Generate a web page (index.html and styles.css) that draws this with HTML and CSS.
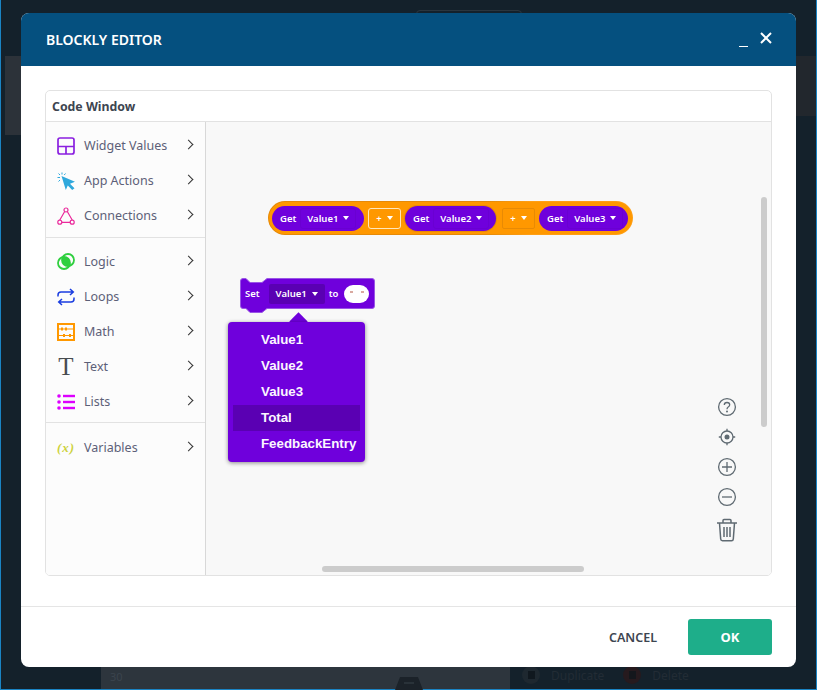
FILE: index.html
```html
<!DOCTYPE html>
<html lang="en">
<head>
    <meta charset="UTF-8">
    <meta name="viewport" content="width=device-width, initial-scale=1.0">
    <title>Blockly Editor</title>
    <link rel="stylesheet" href="styles.css">
</head>
<body>

<!-- dimmed page behind the dialog -->
<div class="page">
    <div class="topbar"><span class="top-btn"></span></div>
    <div class="bands">
        <div class="band-left"></div>
        <div class="band-right"></div>
    </div>
    <div class="bottom">
        <div class="bottom-left"></div>
        <div class="bottom-mid">
            <span class="dim-num">30</span>
            <svg class="dim-handle" width="28" height="13" viewBox="0 0 28 13"><path d="M5 0H23L28 13H0Z" fill="#1b2229"/><path d="M9 6H19" stroke="#39424b" stroke-width="1"/></svg>
        </div>
        <div class="bottom-right">
            <span class="dim-circle"><i></i></span><span class="dim-text">Duplicate</span>
            <span class="dim-circle dim-red"><i></i></span><span class="dim-text">Delete</span>
        </div>
    </div>
</div>

<div class="modal">
    <div class="modal-head">
        <span class="modal-title">BLOCKLY EDITOR</span>
        <span class="modal-min"></span>
        <svg class="modal-close" width="12" height="12" viewBox="0 0 12 12"><path d="M1 1L11 11M11 1L1 11" stroke="#fff" stroke-width="2"/></svg>
    </div>

    <div class="modal-body">
        <div class="card">
            <div class="card-head">Code Window</div>
            <div class="card-main">
                <div class="sidebar">
                    <div class="side-group side-first">
                        <div class="side-item">
                            <svg class="side-icon" viewBox="0 0 18 18"><rect x="1" y="1" width="16" height="16" rx="2" fill="none" stroke="#8a1fe0" stroke-width="1.7"/><path d="M1 9.500H17M9 9.500V17" stroke="#8a1fe0" stroke-width="1.7"/></svg>
                            <span class="side-label">Widget Values</span><span class="chev"></span>
                        </div>
                        <div class="side-item">
                            <svg class="side-icon" viewBox="0 0 18 18"><path d="M4.500 4L18 9.800L13 11.800L17.500 16.200L15.200 18L10.800 13.400L8.800 18Z" fill="#2fa8dc"/><path d="M.5 5.500H3M5 .5V2.500M1.500 1.500L3 3M8.500 1.500L7.200 3M1.500 9.500L3 8" stroke="#2fa8dc" stroke-width="1"/></svg>
                            <span class="side-label">App Actions</span><span class="chev"></span>
                        </div>
                        <div class="side-item">
                            <svg class="side-icon" viewBox="0 0 18 18"><path d="M7.700 4.500L2.800 13M4.800 15.300H13.200M10.300 4.500L15.200 13" fill="none" stroke="#ea2a9b" stroke-width="1.200"/><circle cx="9" cy="3" r="2" fill="none" stroke="#ea2a9b" stroke-width="1.200"/><circle cx="2.800" cy="15.200" r="2" fill="none" stroke="#ea2a9b" stroke-width="1.200"/><circle cx="15.200" cy="15.200" r="2" fill="none" stroke="#ea2a9b" stroke-width="1.200"/></svg>
                            <span class="side-label">Connections</span><span class="chev"></span>
                        </div>
                    </div>
                    <div class="side-group">
                        <div class="side-item">
                            <svg class="side-icon" viewBox="0 0 18 18"><circle cx="7" cy="10" r="6" fill="none" stroke="#2fcf3f" stroke-width="1.800"/><circle cx="11" cy="7" r="6" fill="none" stroke="#2fcf3f" stroke-width="1.800"/><path d="M5.600 4.500A6 6 0 0 1 12.500 12.500A6 6 0 0 1 5.600 4.500Z" fill="#2fcf3f"/></svg>
                            <span class="side-label">Logic</span><span class="chev"></span>
                        </div>
                        <div class="side-item">
                            <svg class="side-icon" viewBox="0 0 18 18"><path d="M1 8.500V7Q1 4 4 4H16M13 1L16.300 4L13 7M17 9.500V11Q17 14 14 14H2M5 11L1.700 14L5 17" fill="none" stroke="#1a3de0" stroke-width="1.500"/></svg>
                            <span class="side-label">Loops</span><span class="chev"></span>
                        </div>
                        <div class="side-item">
                            <svg class="side-icon" viewBox="0 0 18 18"><rect x="1" y="1" width="16" height="16" fill="none" stroke="#ff9800" stroke-width="2"/><path d="M1 6H17M1 12.500H17" stroke="#ff9800" stroke-width="1.200"/><path d="M5 4.500V7.500M9 4.500V7.500M13 11V14M7 11V14" stroke="#ff9800" stroke-width="2"/></svg>
                            <span class="side-label">Math</span><span class="chev"></span>
                        </div>
                        <div class="side-item">
                            <span class="side-icon icon-t">T</span>
                            <span class="side-label">Text</span><span class="chev"></span>
                        </div>
                        <div class="side-item">
                            <svg class="side-icon" viewBox="0 0 18 18"><g fill="#dd00ff"><circle cx="2" cy="3" r="1.800"/><circle cx="2" cy="9" r="1.800"/><circle cx="2" cy="15" r="1.800"/><rect x="6" y="1.800" width="12" height="2.400"/><rect x="6" y="7.800" width="12" height="2.400"/><rect x="6" y="13.800" width="12" height="2.400"/></g></svg>
                            <span class="side-label">Lists</span><span class="chev"></span>
                        </div>
                    </div>
                    <div class="side-group side-last">
                        <div class="side-item">
                            <span class="side-icon icon-x">(x)</span>
                            <span class="side-label">Variables</span><span class="chev"></span>
                        </div>
                    </div>
                </div>

                <div class="workspace">
                    <div class="expr">
                        <div class="pill pill-a"><span class="blk-text">Get</span><span class="blk-field">Value1<i class="caret"></i></span></div>
                        <div class="op op-selected">+<i class="caret"></i></div>
                        <div class="pill pill-b"><span class="blk-text">Get</span><span class="blk-field">Value2<i class="caret"></i></span></div>
                        <div class="op op-second">+<i class="caret"></i></div>
                        <div class="pill pill-c"><span class="blk-text">Get</span><span class="blk-field">Value3<i class="caret"></i></span></div>
                    </div>

                    <div class="set-block">
                        <svg class="set-shape" width="135" height="36" viewBox="0 0 135 36"><path d="M3 .5H6L10 4.500H22L27 .5H132Q134.500 .5 134.500 3V28Q134.500 30.500 132 30.500H27L22 34.500H10L6 30.500H3Q.5 30.500 .5 28V3Q.5 .5 3 .5Z" fill="#6f00dc" stroke="#9a55e6"/></svg>
                        <div class="set-row">
                            <span class="blk-text">Set</span>
                            <span class="set-field">Value1<i class="caret"></i></span>
                            <span class="blk-text">to</span>
                            <span class="set-input"><i></i><i></i></span>
                        </div>
                    </div>

                    <div class="menu-arrow"></div>
                    <div class="menu">
                        <div class="menu-item">Value1</div>
                        <div class="menu-item">Value2</div>
                        <div class="menu-item">Value3</div>
                        <div class="menu-item menu-active">Total</div>
                        <div class="menu-item">FeedbackEntry</div>
                    </div>

                    <div class="tools">
                        <svg width="20" height="20" viewBox="0 0 20 20"><circle cx="10" cy="10" r="8.400" fill="none" stroke="#5f6a72" stroke-width="1.300"/><path d="M7.300 8Q7.300 5.500 10 5.500Q12.700 5.500 12.700 7.800Q12.700 9.200 11.200 10Q10 10.700 10 12.300" fill="none" stroke="#5f6a72" stroke-width="1.300"/><circle cx="10" cy="14.500" r="1" fill="#5f6a72"/></svg>
                        <svg width="20" height="20" viewBox="0 0 20 20"><circle cx="10" cy="10" r="6" fill="none" stroke="#5f6a72" stroke-width="1.300"/><circle cx="10" cy="10" r="2.500" fill="#5f6a72"/><path d="M10 1.800V4M10 16V18.200M1.800 10H4M16 10H18.200" stroke="#5f6a72" stroke-width="1.300"/></svg>
                        <svg width="20" height="20" viewBox="0 0 20 20"><circle cx="10" cy="10" r="8.400" fill="none" stroke="#5f6a72" stroke-width="1.300"/><path d="M10 5V15M5 10H15" stroke="#5f6a72" stroke-width="1.300"/></svg>
                        <svg width="20" height="20" viewBox="0 0 20 20"><circle cx="10" cy="10" r="8.400" fill="none" stroke="#5f6a72" stroke-width="1.300"/><path d="M5 10H15" stroke="#5f6a72" stroke-width="1.300"/></svg>
                        <svg class="trash" width="22" height="24" viewBox="0 0 22 24"><path d="M1 5H21M7 4.500V2.500Q7 1.500 8 1.500H14Q15 1.500 15 2.500V4.500" fill="none" stroke="#5f6a72" stroke-width="1.500"/><path d="M3.500 5L4.700 21Q4.800 22.800 6.500 22.800H15.500Q17.200 22.800 17.300 21L18.500 5" fill="none" stroke="#5f6a72" stroke-width="1.500"/><path d="M8 9V19M11 9V19M14 9V19" stroke="#5f6a72" stroke-width="1.500"/></svg>
                    </div>

                    <div class="scroll-v"></div>
                    <div class="scroll-h"></div>
                </div>
            </div>
        </div>
    </div>

    <div class="modal-foot">
        <span class="btn-cancel">CANCEL</span>
        <span class="btn-ok">OK</span>
    </div>
</div>

</body>
</html>
```

FILE: styles.css
```css
* {
    box-sizing: border-box;
}

body {
    margin: 0;
    height: 690px;
    overflow: hidden;
    background: #14212b;
    font-family: "Noto Sans", Arial, sans-serif;
}

/* Dimmed page */
.page {
    height: 690px;
    display: flex;
    flex-direction: column;
    border: 1px solid #1a84c4;
    border-top: none;
}

.topbar {
    height: 56px;
    display: flex;
    justify-content: center;
    padding: 10px 0 0 120px;
    flex-shrink: 0;
}

.top-btn {
    width: 106px;
    height: 20px;
    border: 1px solid #2b363f;
    border-radius: 4px;
}

.bands {
    display: flex;
    align-items: flex-start;
    padding-left: 4px;
}

.band-left {
    flex: 1;
    height: 79px;
    background: #2c3239;
}

.band-right {
    width: 20px;
    height: 60px;
    background: #22272d;
}

.bottom {
    margin-top: auto;
    height: 22px;
    display: flex;
}

.bottom-left {
    width: 100px;
}

.bottom-mid {
    width: 409px;
    background: #2d353d;
    display: flex;
    align-items: flex-start;
    padding: 2px 0 0 9px;
}

.dim-num {
    font-size: 11px;
    color: #3b444d;
}

.dim-handle {
    margin: 8px 0 0 272px;
}

.bottom-right {
    flex: 1;
    display: flex;
    align-items: flex-start;
    padding: 0 0 0 12px;
}

.dim-circle {
    width: 18px;
    height: 18px;
    border-radius: 50%;
    background: #1e2830;
    margin-top: -1px;
    display: flex;
    align-items: center;
    justify-content: center;
}

.dim-circle i {
    width: 7px;
    height: 8px;
    background: #10181f;
}

.dim-red {
    background: #261a1e;
    margin-left: 19px;
}

.dim-red i {
    background: #14171c;
}

.dim-text {
    font-size: 12px;
    color: #222c35;
    margin-left: 11px;
}

/* Dialog */
.modal {
    position: absolute;
    left: 21px;
    top: 13px;
    width: 775px;
    height: 654px;
    background: #fff;
    border-radius: 8px;
    display: flex;
    flex-direction: column;
    overflow: hidden;
}

.modal-head {
    height: 53px;
    background: #05507f;
    display: flex;
    align-items: center;
    padding: 0 24px 0 25px;
    flex-shrink: 0;
}

.modal-title {
    font-size: 14px;
    font-weight: 600;
    color: #fff;
    margin-right: auto;
}

.modal-min {
    width: 9px;
    height: 1px;
    background: #fff;
    margin: 14px 12px 0 0;
}

.modal-close {
    margin-top: -3px;
}

.modal-body {
    flex: 1;
    padding: 24px 24px 30px 24px;
    display: flex;
    min-height: 0;
}

.card {
    flex: 1;
    border: 1px solid #e2e2e2;
    border-radius: 5px;
    display: flex;
    flex-direction: column;
    overflow: hidden;
}

.card-head {
    height: 31px;
    border-bottom: 1px solid #e2e2e2;
    font-size: 12.300px;
    font-weight: 700;
    color: #3d4550;
    padding-left: 6px;
    line-height: 32px;
    flex-shrink: 0;
}

.card-main {
    flex: 1;
    display: flex;
    min-height: 0;
}

/* Toolbox */
.sidebar {
    width: 160px;
    background: #fcfcfc;
    border-right: 1px solid #d8d8d8;
    flex-shrink: 0;
    padding-top: 5px;
}

.side-group {
    padding: 3px 0 3px;
    border-bottom: 1px solid #e2e2e2;
    margin-bottom: 3px;
}

.side-first {
    padding: 1px 0 4px;
}

.side-last {
    border-bottom: none;
    padding-top: 4px;
}

.side-item {
    height: 35px;
    display: flex;
    align-items: center;
    padding: 0 12px 0 11px;
}

.side-icon {
    width: 18px;
    height: 18px;
    flex-shrink: 0;
    display: block;
}

.icon-t {
    font-family: "Liberation Serif", serif;
    font-size: 25px;
    line-height: 18px;
    color: #474c50;
    text-align: center;
}

.icon-x {
    font-family: "Liberation Serif", serif;
    font-style: italic;
    font-weight: 700;
    font-size: 13px;
    letter-spacing: 1px;
    line-height: 18px;
    color: #cdd23c;
    text-align: center;
    white-space: nowrap;
}

.side-label {
    font-size: 12.500px;
    color: #5c6078;
    margin-left: 9px;
    flex: 1;
}

.chev {
    width: 7px;
    height: 7px;
    border-top: 1.300px solid #333;
    border-right: 1.300px solid #333;
    transform: rotate(45deg);
    margin: -2px 1px 0 0;
}

/* Blocks canvas */
.workspace {
    flex: 1;
    position: relative;
    background: #f8f8f8;
    overflow: hidden;
}

.expr {
    position: absolute;
    left: 62px;
    top: 79px;
    width: 365px;
    height: 34px;
    border: 1.500px solid transparent;
    background: linear-gradient(#ff9800, #ff9800) padding-box, linear-gradient(90deg, #e68a08 60%, #ff9f14 72%) border-box;
    border-radius: 17px;
    display: flex;
    align-items: center;
    padding: 0 3px;
}

.pill {
    height: 25px;
    flex-shrink: 0;
    background: #6f00dc;
    border-radius: 13px;
    display: flex;
    align-items: center;
    padding: 0 3px 0 8px;
}

.pill-a {
    width: 92px;
}

.pill-b {
    width: 91px;
    box-shadow: 0 0 0 1px #e88a04;
}

.pill-c {
    width: 89px;
}

.blk-text {
    font-size: 9.500px;
    font-weight: 600;
    color: #fff;
}

.blk-field {
    display: flex;
    align-items: center;
    height: 21px;
    font-size: 9.500px;
    font-weight: 600;
    color: #fff;
    margin-left: 4px;
    padding: 0 6px 0 6px;
    border: 1px solid #6a00d2;
    border-radius: 3px;
}

.caret {
    width: 0;
    height: 0;
    border-left: 3.500px solid transparent;
    border-right: 3.500px solid transparent;
    border-top: 4px solid #fff;
    margin-left: 5px;
}

.op {
    width: 33px;
    height: 21px;
    flex-shrink: 0;
    margin: 0 4px;
    border: 1px solid #e88a04;
    border-radius: 2px;
    display: flex;
    align-items: center;
    justify-content: center;
    font-size: 9.500px;
    font-weight: 600;
    color: #fff;
}

.op-selected {
    border: 1.500px solid #ffe6bb;
    border-radius: 3px;
}

.op-second {
    margin-left: 6px;
}

.set-block {
    position: absolute;
    left: 34px;
    top: 156px;
    width: 135px;
    height: 36px;
}

.set-shape {
    position: absolute;
    left: 0;
    top: 0;
}

.set-row {
    position: relative;
    height: 31px;
    display: flex;
    align-items: center;
    padding-left: 5px;
}

.set-field {
    width: 56px;
    height: 20px;
    margin-left: 9px;
    margin-right: 4px;
    background: #5a00b3;
    border-radius: 2px;
    display: flex;
    align-items: center;
    justify-content: center;
    font-size: 9.500px;
    font-weight: 600;
    color: #fff;
}

.set-input {
    width: 25px;
    height: 18px;
    margin-left: 6px;
    background: #fff;
    border-radius: 9px;
    display: flex;
    justify-content: center;
    gap: 8px;
    padding-top: 6px;
}

.set-input i {
    width: 3px;
    height: 2px;
    background: #d9a9a0;
}

/* Dropdown */
.menu-arrow {
    position: absolute;
    left: 86px;
    top: 193px;
    width: 13px;
    height: 13px;
    background: #6f00dc;
    transform: rotate(45deg);
}

.menu {
    position: absolute;
    left: 22px;
    top: 200px;
    width: 137px;
    height: 140px;
    padding: 5px;
    background: #6f00dc;
    border-radius: 4px;
    box-shadow: 0 1px 4px rgba(0, 0, 0, 0.45);
}

.menu-item {
    height: 26px;
    line-height: 26px;
    padding-left: 28px;
    font-family: "Liberation Sans", Arial, sans-serif;
    font-size: 13.300px;
    font-weight: 700;
    color: #fbf6ff;
    white-space: nowrap;
}

.menu-active {
    background: #5a00b3;
}

/* Canvas controls */
.tools {
    position: absolute;
    right: 33px;
    top: 275px;
    width: 22px;
    display: flex;
    flex-direction: column;
    align-items: center;
    gap: 10px;
}

.tools svg {
    display: block;
}

.tools .trash {
    margin-top: 1px;
}

.scroll-v {
    position: absolute;
    left: 555px;
    top: 75px;
    width: 6px;
    height: 230px;
    background: #ccc;
    border-radius: 3px;
}

.scroll-h {
    position: absolute;
    left: 116px;
    top: 444px;
    width: 262px;
    height: 6px;
    background: #ccc;
    border-radius: 3px;
}

/* Footer */
.modal-foot {
    height: 61px;
    border-top: 1px solid #e5e5e5;
    display: flex;
    align-items: center;
    justify-content: flex-end;
    padding: 0 24px 0 0;
    flex-shrink: 0;
}

.btn-cancel {
    font-size: 12.500px;
    font-weight: 600;
    color: #3d4550;
    margin-right: 31px;
}

.btn-ok {
    width: 84px;
    height: 36px;
    background: #1eae8a;
    border-radius: 3px;
    color: #fff;
    font-size: 13px;
    font-weight: 700;
    display: flex;
    align-items: center;
    justify-content: center;
}
```
